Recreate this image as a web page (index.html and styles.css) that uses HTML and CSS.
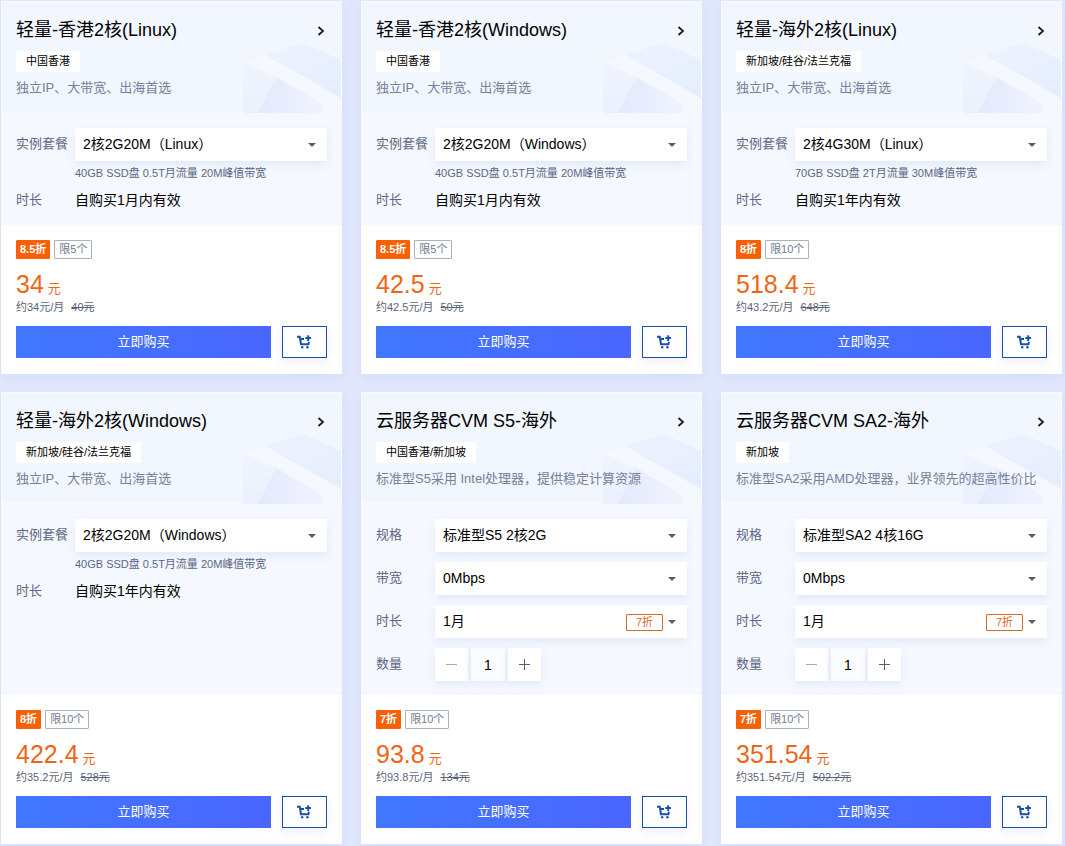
FILE: index.html
```html
<!DOCTYPE html>
<html lang="zh-CN">
<head>
<meta charset="utf-8">
<meta name="viewport" content="width=device-width, initial-scale=1">
<title>云服务器</title>
<link rel="stylesheet" href="styles.css">
</head>
<body>
<svg class="defs" aria-hidden="true">
  <defs>
    <linearGradient id="g-top" x1="0" y1="0" x2="1" y2="1"><stop offset="0" stop-color="#edf2fe"/><stop offset="1" stop-color="#e5edfd"/></linearGradient>
    <linearGradient id="g-left" x1="0" y1="0" x2="0" y2="1"><stop offset="0" stop-color="#f0f4fe"/><stop offset="1" stop-color="#ebf0fd"/></linearGradient>
    <linearGradient id="g-in" x1="0" y1="0" x2="1" y2="0"><stop offset="0" stop-color="#e4e9fd"/><stop offset="1" stop-color="#f0f4ff"/></linearGradient>
  </defs>
  <symbol id="deco" viewBox="0 0 98 71">
    <path d="M22 13 60 1 98 18V56Z" fill="url(#g-top)"/>
    <path d="M0 20 22 13 98 56V71H60Z" fill="#f5f8ff"/>
    <path d="M0 20 33 35 15 71H0Z" fill="url(#g-left)"/>
    <path d="M33 35 80 62V71H15Z" fill="url(#g-in)"/>
    <path d="M33 35 40 39 43 71H30Z" fill="#e8edfe"/>
  </symbol>
  <symbol id="arrow" viewBox="0 0 8 10"><path d="M1.5 1 6 5 1.5 9" fill="none" stroke="#16181d" stroke-width="1.7"/></symbol>
  <symbol id="cart" viewBox="0 0 15 14">
    <path d="M0 1.8H2.8L4 9.2H11.4L12 6.8M3 4H7" fill="none" stroke="#1550ad" stroke-width="2"/>
    <path d="M11.2 .3V5.9M8.4 3.1H14" fill="none" stroke="#1550ad" stroke-width="2"/>
    <circle cx="5.2" cy="12.3" r="1.2" fill="#1550ad"/><circle cx="10.4" cy="12.3" r="1.2" fill="#1550ad"/>
  </symbol>
</svg>
<main class="grid">

  <article class="card">
    <header class="head">
      <svg class="deco" aria-hidden="true"><use href="#deco"/></svg>
      <div class="title-row"><h2 class="title">轻量-香港2核(Linux)</h2><a class="more" href="#" aria-label="详情"><svg aria-hidden="true"><use href="#arrow"/></svg></a></div>
      <span class="tag">中国香港</span>
      <p class="desc">独立IP、大带宽、出海首选</p>
    </header>
    <div class="body">
      <div class="field"><label class="label" for="p1">实例套餐</label><span class="select"><select id="p1"><option>2核2G20M（Linux）</option></select></span></div>
      <p class="hint">40GB SSD盘 0.5T月流量 20M峰值带宽</p>
      <div class="info"><span class="label">时长</span><span class="value">自购买1月内有效</span></div>
    </div>
    <footer class="foot">
      <div class="chips"><span class="chip off">8.5折</span><span class="chip">限5个</span></div>
      <p class="price"><span class="amount">34</span>元</p>
      <p class="monthly">约34元/月<del>40元</del></p>
      <div class="actions"><button class="buy" type="button">立即购买</button><button class="cart" type="button" aria-label="加入购物车"><svg aria-hidden="true"><use href="#cart"/></svg></button></div>
    </footer>
  </article>

  <article class="card">
    <header class="head">
      <svg class="deco" aria-hidden="true"><use href="#deco"/></svg>
      <div class="title-row"><h2 class="title">轻量-香港2核(Windows)</h2><a class="more" href="#" aria-label="详情"><svg aria-hidden="true"><use href="#arrow"/></svg></a></div>
      <span class="tag">中国香港</span>
      <p class="desc">独立IP、大带宽、出海首选</p>
    </header>
    <div class="body">
      <div class="field"><label class="label" for="p2">实例套餐</label><span class="select"><select id="p2"><option>2核2G20M（Windows）</option></select></span></div>
      <p class="hint">40GB SSD盘 0.5T月流量 20M峰值带宽</p>
      <div class="info"><span class="label">时长</span><span class="value">自购买1月内有效</span></div>
    </div>
    <footer class="foot">
      <div class="chips"><span class="chip off">8.5折</span><span class="chip">限5个</span></div>
      <p class="price"><span class="amount">42.5</span>元</p>
      <p class="monthly">约42.5元/月<del>50元</del></p>
      <div class="actions"><button class="buy" type="button">立即购买</button><button class="cart" type="button" aria-label="加入购物车"><svg aria-hidden="true"><use href="#cart"/></svg></button></div>
    </footer>
  </article>

  <article class="card">
    <header class="head">
      <svg class="deco" aria-hidden="true"><use href="#deco"/></svg>
      <div class="title-row"><h2 class="title">轻量-海外2核(Linux)</h2><a class="more" href="#" aria-label="详情"><svg aria-hidden="true"><use href="#arrow"/></svg></a></div>
      <span class="tag">新加坡/硅谷/法兰克福</span>
      <p class="desc">独立IP、大带宽、出海首选</p>
    </header>
    <div class="body">
      <div class="field"><label class="label" for="p3">实例套餐</label><span class="select"><select id="p3"><option>2核4G30M（Linux）</option></select></span></div>
      <p class="hint">70GB SSD盘 2T月流量 30M峰值带宽</p>
      <div class="info"><span class="label">时长</span><span class="value">自购买1年内有效</span></div>
    </div>
    <footer class="foot">
      <div class="chips"><span class="chip off">8折</span><span class="chip">限10个</span></div>
      <p class="price"><span class="amount">518.4</span>元</p>
      <p class="monthly">约43.2元/月<del>648元</del></p>
      <div class="actions"><button class="buy" type="button">立即购买</button><button class="cart" type="button" aria-label="加入购物车"><svg aria-hidden="true"><use href="#cart"/></svg></button></div>
    </footer>
  </article>

  <article class="card">
    <header class="head">
      <svg class="deco" aria-hidden="true"><use href="#deco"/></svg>
      <div class="title-row"><h2 class="title">轻量-海外2核(Windows)</h2><a class="more" href="#" aria-label="详情"><svg aria-hidden="true"><use href="#arrow"/></svg></a></div>
      <span class="tag">新加坡/硅谷/法兰克福</span>
      <p class="desc">独立IP、大带宽、出海首选</p>
    </header>
    <div class="body">
      <div class="field"><label class="label" for="p4">实例套餐</label><span class="select"><select id="p4"><option>2核2G20M（Windows）</option></select></span></div>
      <p class="hint">40GB SSD盘 0.5T月流量 20M峰值带宽</p>
      <div class="info"><span class="label">时长</span><span class="value">自购买1年内有效</span></div>
    </div>
    <footer class="foot">
      <div class="chips"><span class="chip off">8折</span><span class="chip">限10个</span></div>
      <p class="price"><span class="amount">422.4</span>元</p>
      <p class="monthly">约35.2元/月<del>528元</del></p>
      <div class="actions"><button class="buy" type="button">立即购买</button><button class="cart" type="button" aria-label="加入购物车"><svg aria-hidden="true"><use href="#cart"/></svg></button></div>
    </footer>
  </article>

  <article class="card">
    <header class="head">
      <svg class="deco" aria-hidden="true"><use href="#deco"/></svg>
      <div class="title-row"><h2 class="title">云服务器CVM S5-海外</h2><a class="more" href="#" aria-label="详情"><svg aria-hidden="true"><use href="#arrow"/></svg></a></div>
      <span class="tag">中国香港/新加坡</span>
      <p class="desc">标准型S5采用 Intel处理器，提供稳定计算资源</p>
    </header>
    <div class="body">
      <div class="field"><label class="label" for="s5">规格</label><span class="select"><select id="s5"><option>标准型S5 2核2G</option></select></span></div>
      <div class="field"><label class="label" for="b5">带宽</label><span class="select"><select id="b5"><option>0Mbps</option></select></span></div>
      <div class="field"><label class="label" for="d5">时长</label><span class="select"><select id="d5"><option>1月</option></select><span class="deal">7折</span></span></div>
      <div class="field"><label class="label" for="n5">数量</label><span class="stepper"><button class="step minus" type="button" aria-label="减少"></button><input class="count" id="n5" type="text" inputmode="numeric" value="1"><button class="step plus" type="button" aria-label="增加"></button></span></div>
    </div>
    <footer class="foot">
      <div class="chips"><span class="chip off">7折</span><span class="chip">限10个</span></div>
      <p class="price"><span class="amount">93.8</span>元</p>
      <p class="monthly">约93.8元/月<del>134元</del></p>
      <div class="actions"><button class="buy" type="button">立即购买</button><button class="cart" type="button" aria-label="加入购物车"><svg aria-hidden="true"><use href="#cart"/></svg></button></div>
    </footer>
  </article>

  <article class="card">
    <header class="head">
      <svg class="deco" aria-hidden="true"><use href="#deco"/></svg>
      <div class="title-row"><h2 class="title">云服务器CVM SA2-海外</h2><a class="more" href="#" aria-label="详情"><svg aria-hidden="true"><use href="#arrow"/></svg></a></div>
      <span class="tag">新加坡</span>
      <p class="desc">标准型SA2采用AMD处理器，业界领先的超高性价比</p>
    </header>
    <div class="body">
      <div class="field"><label class="label" for="s6">规格</label><span class="select"><select id="s6"><option>标准型SA2 4核16G</option></select></span></div>
      <div class="field"><label class="label" for="b6">带宽</label><span class="select"><select id="b6"><option>0Mbps</option></select></span></div>
      <div class="field"><label class="label" for="d6">时长</label><span class="select"><select id="d6"><option>1月</option></select><span class="deal">7折</span></span></div>
      <div class="field"><label class="label" for="n6">数量</label><span class="stepper"><button class="step minus" type="button" aria-label="减少"></button><input class="count" id="n6" type="text" inputmode="numeric" value="1"><button class="step plus" type="button" aria-label="增加"></button></span></div>
    </div>
    <footer class="foot">
      <div class="chips"><span class="chip off">7折</span><span class="chip">限10个</span></div>
      <p class="price"><span class="amount">351.54</span>元</p>
      <p class="monthly">约351.54元/月<del>502.2元</del></p>
      <div class="actions"><button class="buy" type="button">立即购买</button><button class="cart" type="button" aria-label="加入购物车"><svg aria-hidden="true"><use href="#cart"/></svg></button></div>
    </footer>
  </article>

</main>
</body>
</html>
```
FILE: styles.css
```css
* { box-sizing: border-box; }
body {
  margin: 0;
  background: #e1e8fd;
  color: #000;
  font-family: "Liberation Sans", "Noto Sans CJK SC", sans-serif;
  font-size: 14px;
}
h2, p { margin: 0; font-weight: 400; }
button, input, select { font: inherit; color: inherit; margin: 0; }
.defs { position: absolute; width: 0; height: 0; }

.grid {
  display: grid;
  grid-template-columns: repeat(3, minmax(0, 1fr));
  gap: 18px 19px;
  padding: 1px 3px 2px 1px;
}
.card {
  display: flex;
  flex-direction: column;
  background: #fff;
  box-shadow: 0 4px 12px rgba(70, 105, 200, .08);
}

.head {
  position: relative;
  padding: 16px 15px 15px;
  background: #f2f6ff;
  box-shadow: inset 0 0 0 1px #f9fbff;
}
.deco { position: absolute; right: 1px; bottom: 0; width: 98px; height: 71px; }
.title-row { display: flex; align-items: center; justify-content: space-between; }
.title { font-size: 18px; line-height: 26px; }
.more { display: flex; padding: 1px 2px 0; }
.more svg { width: 8px; height: 10px; }
.tag {
  display: table;
  position: relative;
  margin-top: 8px;
  padding: 0 10px;
  background: #fff;
  font-size: 11px;
  line-height: 21px;
}
.desc { position: relative; margin-top: 6px; color: #76809a; font-size: 13px; line-height: 20px; white-space: nowrap; }

.body { flex: 1; padding: 15px 15px 14px; background: #f5f8ff; }
.field, .info { display: grid; grid-template-columns: 59px minmax(0, 1fr); }
.field + .field { margin-top: 10px; }
.label { color: #5c6785; font-size: 13px; line-height: 31px; }
.info { margin-top: 8px; }
.info .label, .value { line-height: 22px; }
.hint { margin: 4px 0 0 59px; color: #5c6785; font-size: 11px; line-height: 16px; }

.select { position: relative; display: block; height: 33px; }
.select select {
  appearance: none;
  width: 100%;
  height: 100%;
  padding: 0 30px 2px 8px;
  border: 0;
  border-radius: 0;
  background: #fff;
  box-shadow: 0 4px 8px rgba(70, 105, 180, .1);
}
.select::after {
  content: "";
  position: absolute;
  top: 15px;
  right: 11px;
  border: 4px solid transparent;
  border-top-color: #545c6e;
  border-bottom: 0;
  pointer-events: none;
}
.deal {
  position: absolute;
  top: 9px;
  right: 24px;
  width: 37px;
  border: 1px solid #e0692a;
  border-radius: 1px;
  color: #e0692a;
  font-size: 11px;
  line-height: 15px;
  text-align: center;
  pointer-events: none;
}

.stepper { display: flex; gap: 3px; }
.step, .count {
  width: 33px;
  height: 33px;
  padding: 0;
  border: 0;
  background: #fff;
  box-shadow: 0 3px 8px rgba(70, 105, 180, .1);
  text-align: center;
}
.count { width: 34px; background: #fbfcff; }
.minus { color: #a4aab8; }
.plus { color: #555f75; }
.step {
  background-image: linear-gradient(currentColor, currentColor), linear-gradient(currentColor, currentColor);
  background-repeat: no-repeat;
  background-position: center;
  background-size: 11px 1px, 1px 11px;
}
.minus { background-size: 11px 1px, 0 0; }

.foot { padding: 15px 15px 16px; }
.chips { display: flex; gap: 4px; }
.chip {
  padding: 0 4px;
  border: 1px solid #aab3bf;
  border-radius: 1px;
  color: #717b8f;
  font-size: 11px;
  line-height: 17px;
}
.off { padding: 0 3px; border-color: #f95f05; background: #f95f05; color: #fff; font-weight: 700; }
.price { margin-top: 10px; color: #ee6614; font-size: 13px; line-height: 20px; }
.amount { margin-right: 4px; font-size: 25px; line-height: 30px; }
.monthly { color: #5c6478; font-size: 11px; line-height: 16px; }
.monthly del { margin-left: 7px; }
.actions { display: flex; gap: 11px; margin-top: 11px; }
.buy {
  flex: 1;
  height: 32px;
  padding: 0 0 4px;
  border: 0;
  background: linear-gradient(90deg, #4077ff, #4a66ff);
  color: #fff;
  font-size: 13px;
}
.cart {
  display: flex;
  align-items: center;
  justify-content: center;
  width: 45px;
  height: 32px;
  padding: 0;
  border: 1px solid #1550ad;
  background: #fff;
  box-shadow: 0 5px 10px rgba(60, 80, 150, .08);
}
.cart svg { width: 15px; height: 14px; }
```
